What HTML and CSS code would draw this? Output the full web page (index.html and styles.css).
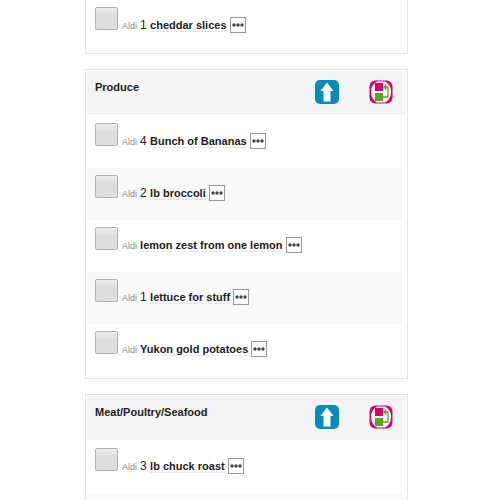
FILE: index.html
```
<!DOCTYPE html>
<html lang="en">
<head>
<meta charset="utf-8">
<title>Shopping list</title>
<link rel="stylesheet" href="styles.css">
</head>
<body>
<svg class="sprite" aria-hidden="true">
  <symbol id="dots" viewBox="0 0 16 16">
    <rect x=".5" y=".5" width="15" height="15" fill="#fff" stroke="#999"/>
    <g fill="#444"><circle cx="4" cy="8" r="1.7"/><circle cx="8" cy="8" r="1.7"/><circle cx="12" cy="8" r="1.7"/></g>
  </symbol>
  <symbol id="up" viewBox="0 0 24 24">
    <rect width="24" height="24" rx="5" fill="#068cbc"/>
    <path d="M12 2.500 18.500 11H15.500v10.500H8.500V11H5.500Z" fill="#fff"/>
  </symbol>
  <symbol id="move" viewBox="0 0 24 24">
    <rect x=".5" y=".5" width="23" height="23" rx="6" fill="#d5006d"/>
    <path d="M8 1.500H16Q22 5 22 12Q22 19 16 22.500H8Q2 19 2 12Q2 5 8 1.500Z" fill="#fff"/>
    <rect x="6" y="3" width="8" height="8" fill="#d5006d"/>
    <rect x="6" y="13" width="8" height="8" fill="#5aa51e"/>
    <path d="M14 17h5V7h-4M17.500 4.500 15 7l2.500 2.500" fill="none" stroke="#5aa51e" stroke-width="1.300"/>
  </symbol>
</svg>
<main class="lists">
  <section class="card card-continued">
    <ul class="items">
      <li class="item"><input type="checkbox" id="i1" class="check"><label for="i1" class="label"><small class="store">Aldi</small> <span class="amount">1 </span><b class="name">cheddar slices</b></label><button class="more" aria-label="More"><svg><use href="#dots"/></svg></button></li>
    </ul>
  </section>
  <section class="card">
    <header class="head"><h2 class="title">Produce</h2><button class="tool" aria-label="Move up"><svg><use href="#up"/></svg></button><button class="tool" aria-label="Rearrange"><svg><use href="#move"/></svg></button></header>
    <ul class="items">
      <li class="item"><input type="checkbox" id="i2" class="check"><label for="i2" class="label"><small class="store">Aldi</small> <span class="amount">4 </span><b class="name">Bunch of Bananas</b></label><button class="more" aria-label="More"><svg><use href="#dots"/></svg></button></li>
      <li class="item"><input type="checkbox" id="i3" class="check"><label for="i3" class="label"><small class="store">Aldi</small> <span class="amount">2 </span><b class="name">lb broccoli</b></label><button class="more" aria-label="More"><svg><use href="#dots"/></svg></button></li>
      <li class="item"><input type="checkbox" id="i4" class="check"><label for="i4" class="label"><small class="store">Aldi</small> <b class="name">lemon zest from one lemon</b></label><button class="more" aria-label="More"><svg><use href="#dots"/></svg></button></li>
      <li class="item"><input type="checkbox" id="i5" class="check"><label for="i5" class="label"><small class="store">Aldi</small> <span class="amount">1 </span><b class="name">lettuce for stuff</b></label><button class="more" aria-label="More"><svg><use href="#dots"/></svg></button></li>
      <li class="item"><input type="checkbox" id="i6" class="check"><label for="i6" class="label"><small class="store">Aldi</small> <b class="name">Yukon gold potatoes</b></label><button class="more" aria-label="More"><svg><use href="#dots"/></svg></button></li>
    </ul>
  </section>
  <section class="card">
    <header class="head"><h2 class="title">Meat/Poultry/Seafood</h2><button class="tool" aria-label="Move up"><svg><use href="#up"/></svg></button><button class="tool" aria-label="Rearrange"><svg><use href="#move"/></svg></button></header>
    <ul class="items">
      <li class="item"><input type="checkbox" id="i7" class="check"><label for="i7" class="label"><small class="store">Aldi</small> <span class="amount">3 </span><b class="name">lb chuck roast</b></label><button class="more" aria-label="More"><svg><use href="#dots"/></svg></button></li>
      <li class="item"></li>
    </ul>
  </section>
</main>
</body>
</html>
```
FILE: styles.css
```
* { box-sizing: border-box; }
body {
  margin: 0;
  height: 100vh;
  overflow: hidden;
  background: #fff;
  color: #222;
  font: 11px/16px "Liberation Sans", Arial, sans-serif;
}
.sprite { display: none; }
.lists {
  display: flex;
  flex-direction: column;
  gap: 15px;
  height: 100%;
  overflow: hidden;
  padding: 0 92px 0 85px;
}
.card { flex: none; border: 1px solid #e4e4e4; padding: 1px 1px 2px; }
.card-continued { border-top: 0; padding: 0 1px 1px; }
.head {
  display: flex;
  align-items: flex-start;
  gap: 30px;
  height: 44px;
  margin-bottom: 1px;
  padding: 9px 13px 0 8px;
  background: #f4f4f4;
}
.title { flex: 1; margin: 0; font-size: 11px; line-height: 14px; }
button { border: 0; padding: 0; background: none; cursor: pointer; }
svg { display: block; width: 100%; height: 100%; }
.tool { width: 24px; height: 24px; }
.items { list-style: none; margin: 0; padding: 0; }
.item {
  display: flex;
  align-items: flex-start;
  height: 52px;
  padding: 7px 8px 0;
}
.item:nth-child(even) { background: #f9f9f9; }
.check {
  appearance: none;
  width: 23px;
  height: 23px;
  margin: 0 4px 0 0;
  border: 1px solid #b2b2b2;
  border-radius: 2px;
  background: linear-gradient(#eee, #dcdcdc 40%, #dedede);
}
.label { padding-top: 10px; white-space: pre; }
.store { color: #8c8c84; font-size: 9px; }
.amount { font-size: 12px; }
.name { border-bottom: 1px solid #e8e8e8; }
.more { width: 16px; height: 16px; margin: 10px 0 0 3px; }
```
